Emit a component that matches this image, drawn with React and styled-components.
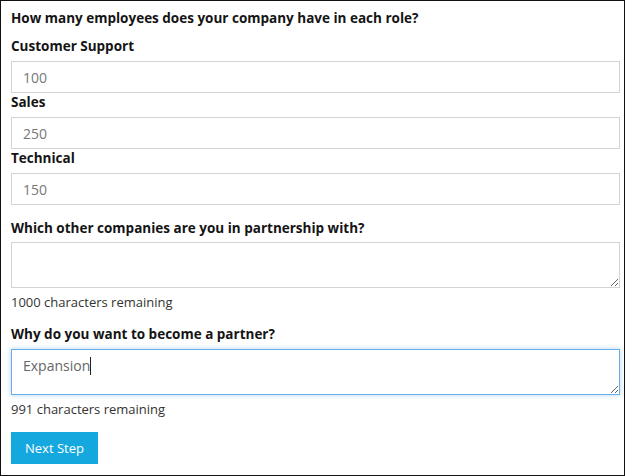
import React from "react";
import styled, { createGlobalStyle, css } from "styled-components";

const GlobalStyle = createGlobalStyle`
  html, body {
    margin: 0;
    padding: 0;
    background: #ffffff;
  }
  * { box-sizing: border-box; }
`;

const Frame = styled.div`
  width: 625px;
  height: 476px;
  border: 1px solid #111;
  background: #fff;
  padding: 7px 4px 0 10px;
  font-family: "Open Sans", "Liberation Sans", sans-serif;
  font-size: 14px;
  line-height: 20px;
  color: #222;
`;

const Form = styled.form`
  display: flex;
  flex-direction: column;
`;

const Question = styled.div`
  font-weight: 700;
  font-size: 13.5px;
  color: #141414;
  margin-top: ${(p) => p.$top || 0}px;
`;

const FieldLabel = styled.label`
  display: block;
  font-weight: 700;
  font-size: 13.5px;
  line-height: 19px;
  color: #141414;
  margin-top: ${(p) => p.$top || 0}px;
  margin-bottom: 5px;
`;

const fieldBase = css`
  width: 609px;
  border: 1px solid #d4d4d4;
  background: #fff;
  font-family: "Open Sans", "Liberation Sans", sans-serif;
  font-size: 14px;
  line-height: 20px;
  color: #777;
  padding: 0 11px;
  outline: none;
  margin: 0;
`;

const TextInput = styled.input`
  ${fieldBase}
  display: block;
  height: 32px;
`;

const TextAreaWrap = styled.div`
  position: relative;
  margin-top: ${(p) => p.$top}px;
  width: 609px;
`;

const TextArea = styled.textarea`
  ${fieldBase}
  display: block;
  height: 46px;
  padding-top: 6px;
  resize: vertical;
  color: #666;
  ${(p) =>
    p.$focused &&
    css`
      border-color: #6aaee6;
      box-shadow: 0 0 5px rgba(102, 175, 233, 0.55);
    `}
`;

/* text mirror over the active field, showing the insertion caret after its value */
const CaretLayer = styled.div`
  position: absolute;
  inset: 0;
  padding: 7px 12px 0;
  font-family: "Open Sans", "Liberation Sans", sans-serif;
  font-size: 14px;
  line-height: 20px;
  color: transparent;
  pointer-events: none;
  white-space: pre;
`;

const Caret = styled.span`
  display: inline-block;
  width: 1px;
  height: 18px;
  background: #222;
  vertical-align: -4px;
`;

const Counter = styled.div`
  color: #333;
  font-size: 13px;
  margin-top: 4px;
`;

const NextButton = styled.button`
  align-self: flex-start;
  margin-top: 13px;
  height: 32px;
  padding: 0 14px;
  border: none;
  background: #15a8de;
  color: #fff;
  font-family: "Open Sans", "Liberation Sans", sans-serif;
  font-size: 13px;
  cursor: pointer;
`;

const roles = [
  { id: "support", label: "Customer Support", value: "100" },
  { id: "sales", label: "Sales", value: "250" },
  { id: "technical", label: "Technical", value: "150" },
];

export default function App() {
  const reason = "Expansion";
  return (
    <>
      <GlobalStyle />
      <Frame>
        <Form onSubmit={(e) => e.preventDefault()}>
          <Question>How many employees does your company have in each role?</Question>
          {roles.map((r, i) => (
            <React.Fragment key={r.id}>
              <FieldLabel htmlFor={r.id} $top={i === 0 ? 9 : 0}>
                {r.label}
              </FieldLabel>
              <TextInput id={r.id} defaultValue={r.value} />
            </React.Fragment>
          ))}

          <Question $top={13}>Which other companies are you in partnership with?</Question>
          <TextAreaWrap $top={4}>
            <TextArea rows={2} />
          </TextAreaWrap>
          <Counter>1000 characters remaining</Counter>

          <Question $top={12}>Why do you want to become a partner?</Question>
          <TextAreaWrap $top={5}>
            <TextArea rows={2} $focused defaultValue={reason} />
            <CaretLayer>
              {reason}
              <Caret />
            </CaretLayer>
          </TextAreaWrap>
          <Counter>{1000 - reason.length} characters remaining</Counter>

          <NextButton type="submit">Next Step</NextButton>
        </Form>
      </Frame>
    </>
  );
}
